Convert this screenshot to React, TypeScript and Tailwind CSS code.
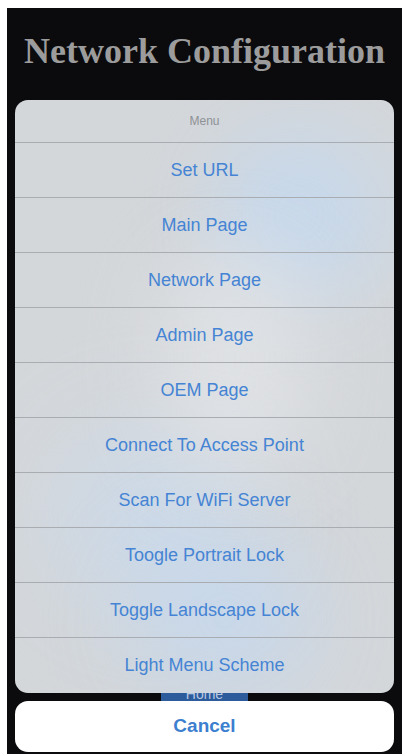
const items = [
  'Set URL',
  'Main Page',
  'Network Page',
  'Admin Page',
  'OEM Page',
  'Connect To Access Point',
  'Scan For WiFi Server',
  'Toogle Portrait Lock',
  'Toggle Landscape Lock',
  'Light Menu Scheme',
];

export default function App() {
  return (
    <div className="w-full h-[754px] bg-white pt-[8px] pl-[7px] pr-[4px] overflow-hidden">
      <div className="h-full bg-[#0b0b0e] flex flex-col px-[8px] pb-[2px]">
        {/* page title behind the sheet */}
        <div className="h-[92px] pt-[25px] flex justify-center">
          <h1 className="font-['Liberation_Serif',serif] font-bold text-[36px] leading-[36px] text-[#9c9c9c] whitespace-nowrap">
            Network Configuration
          </h1>
        </div>

        {/* action sheet */}
        <div className="relative rounded-[13px] overflow-hidden bg-[#d4d7da] font-['Liberation_Sans',Arial,sans-serif]">
          <div className="absolute w-[170px] h-[170px] rounded-full bg-[#c4d9f0] blur-[40px] opacity-80 top-[30px] right-[10px]" />
          <div className="absolute w-[200px] h-[180px] rounded-full bg-[#cadbee] blur-[50px] opacity-70 top-[330px] left-[40px]" />
          <div className="absolute w-[180px] h-[150px] rounded-full bg-[#c5d8ee] blur-[45px] opacity-80 bottom-[0px] left-[120px]" />
          <div className="absolute w-[140px] h-[220px] rounded-full bg-[#e4e6e9] blur-[40px] opacity-70 top-[150px] left-[150px]" />

          <div className="relative">
            <div className="h-[43px] flex items-center justify-center text-[12px] text-[#8e9195] border-b border-[#a9acb0]">
              Menu
            </div>
            {items.map((label, i) => (
              <div
                key={label}
                className={`h-[55px] flex items-center justify-center text-[18px] text-[#4584d4] ${i < items.length - 1 ? 'border-b border-[#a9acb0]' : ''}`}
              >
                {label}
              </div>
            ))}
          </div>
        </div>

        {/* peek of the Home button under the sheet */}
        <div className="h-[8px] flex justify-center overflow-hidden">
          <div className="w-[87px] bg-[#2c5c9c] flex justify-center overflow-hidden">
            <span className="text-[14px] leading-[14px] -mt-[6px] text-[#b8c8e0] font-['Liberation_Sans',Arial,sans-serif]">Home</span>
          </div>
        </div>

        <div className="flex-1 rounded-[13px] bg-white flex items-center justify-center font-['Liberation_Sans',Arial,sans-serif] text-[19px] font-bold text-[#3d7fcf]">
          Cancel
        </div>
      </div>
    </div>
  );
}
